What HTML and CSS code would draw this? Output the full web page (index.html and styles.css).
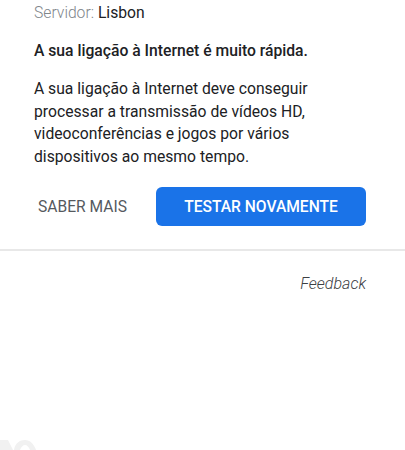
FILE: index.html
```html
<!DOCTYPE html>
<html lang="pt">
<head>
    <meta charset="UTF-8">
    <meta name="viewport" content="width=device-width, initial-scale=1.0">
    <title>Teste de velocidade</title>
    <link rel="stylesheet" href="styles.css">
</head>
<body>
    <div class="card">
        <p class="server"><span class="server-label">Servidor:</span> Lisbon</p>
        <p class="headline">A sua ligação à Internet é muito rápida.</p>
        <p class="summary">A sua ligação à Internet deve conseguir processar a transmissão de vídeos HD, videoconferências e jogos por vários dispositivos ao mesmo tempo.</p>
        <div class="actions">
            <button type="button" class="more-btn">SABER MAIS</button>
            <button type="button" class="retry-btn">TESTAR NOVAMENTE</button>
        </div>
    </div>
    <div class="footer">
        <span class="feedback">Feedback</span>
    </div>
    <svg class="corner-mark" width="40" height="12" viewBox="0 0 40 12">
        <path d="M0 12V2h8l5 10zM14 12c1-7 6-10 11-10s9 4 11 10h-6c-1-3-3-5-5-5s-4 2-5 5z" fill="#f1f1f1"/>
    </svg>
</body>
</html>
```

FILE: styles.css
```css
html, body {
    height: 100%;
}
body {
    margin: 0;
    background: #fff;
    font-family: Roboto, sans-serif;
    color: #202124;
    overflow: hidden;
    position: relative;
}
p {
    margin: 0;
}
.card {
    padding: 2px 39px 23px 34px;
    border-bottom: 2px solid #e8e8e8;
}
.server {
    font-size: 15.7px;
    line-height: 22px;
}
.server-label {
    color: #80868b;
    font-weight: 300;
}
.headline {
    margin-top: 16px;
    font-size: 15.7px;
    font-weight: 500;
    line-height: 22px;
}
.summary {
    margin-top: 16px;
    font-size: 15.7px;
    line-height: 22.5px;
}
.actions {
    display: flex;
    align-items: center;
    justify-content: space-between;
    margin-top: 19px;
}
.more-btn, .retry-btn {
    border: none;
    font-family: inherit;
    font-size: 15.6px;
    padding: 0;
}
.more-btn {
    background: none;
    color: #55595e;
    font-weight: 400;
    margin-left: 4px;
}
.retry-btn {
    width: 210px;
    height: 39px;
    background: #1a73e8;
    color: #fff;
    font-weight: 500;
    border-radius: 6px;
}
.footer {
    display: flex;
    justify-content: flex-end;
    padding: 23px 39px 0 0;
}
.feedback {
    font-size: 16px;
    font-style: italic;
    font-weight: 300;
    color: #3c4043;
}
.corner-mark {
    position: absolute;
    left: 0;
    bottom: 0;
}
```
